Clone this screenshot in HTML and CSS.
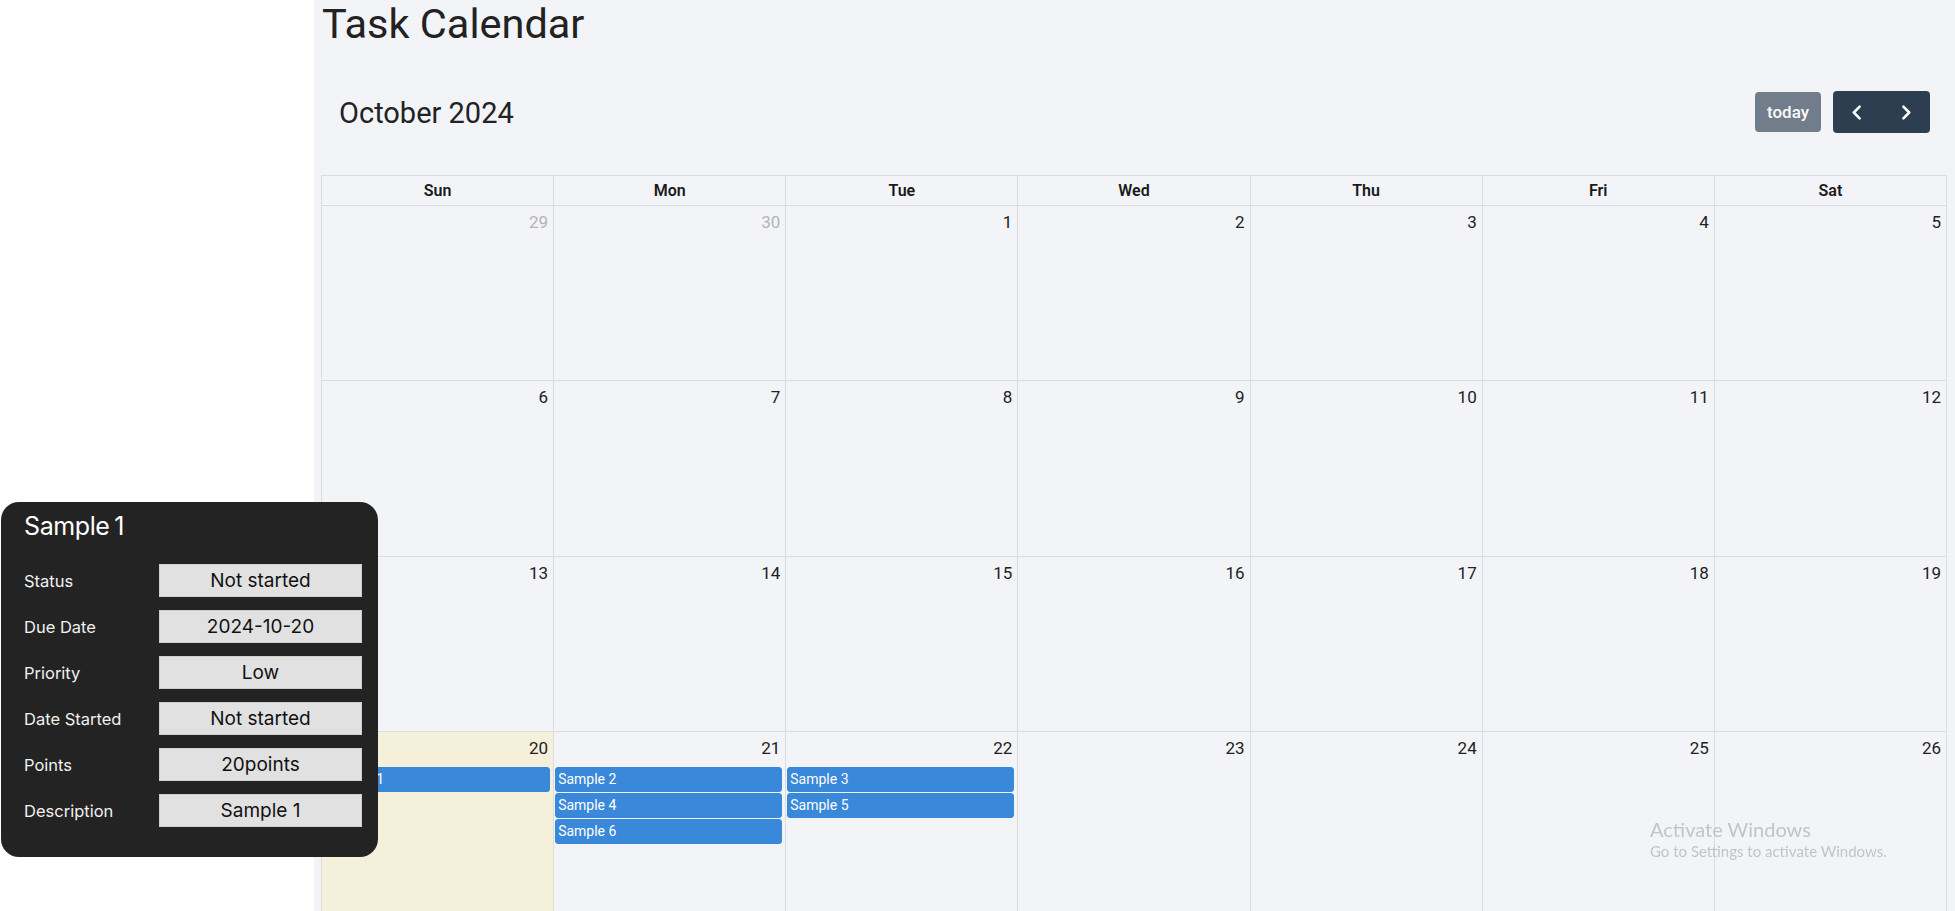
FILE: index.html
```html
<!DOCTYPE html>
<html lang="en">
<head>
<meta charset="utf-8">
<title>Task Calendar</title>
<link rel="stylesheet" href="styles.css">
</head>
<body>
<div class="app">
  <aside class="sidebar"></aside>
  <main class="main">
    <h1 class="page-title">Task Calendar</h1>
    <div class="toolbar">
      <h2 class="month-title">October 2024</h2>
      <div class="toolbar-actions">
        <button class="btn btn-today" type="button">today</button>
        <div class="btn-group">
          <button class="btn btn-nav" type="button" aria-label="prev">
            <svg viewBox="0 0 16 16" width="17" height="17"><polyline points="10,2.5 4.5,8 10,13.5" fill="none" stroke="#fff" stroke-width="2.4" stroke-linecap="round" stroke-linejoin="round"/></svg>
          </button>
          <button class="btn btn-nav" type="button" aria-label="next">
            <svg viewBox="0 0 16 16" width="17" height="17"><polyline points="6,2.5 11.5,8 6,13.5" fill="none" stroke="#fff" stroke-width="2.4" stroke-linecap="round" stroke-linejoin="round"/></svg>
          </button>
        </div>
      </div>
    </div>

    <div class="cal-grid">
      <div class="dow">Sun</div>
      <div class="dow">Mon</div>
      <div class="dow">Tue</div>
      <div class="dow">Wed</div>
      <div class="dow">Thu</div>
      <div class="dow">Fri</div>
      <div class="dow">Sat</div>

      <div class="day other"><span class="num">29</span></div>
      <div class="day other"><span class="num">30</span></div>
      <div class="day"><span class="num">1</span></div>
      <div class="day"><span class="num">2</span></div>
      <div class="day"><span class="num">3</span></div>
      <div class="day"><span class="num">4</span></div>
      <div class="day"><span class="num">5</span></div>

      <div class="day"><span class="num">6</span></div>
      <div class="day"><span class="num">7</span></div>
      <div class="day"><span class="num">8</span></div>
      <div class="day"><span class="num">9</span></div>
      <div class="day"><span class="num">10</span></div>
      <div class="day"><span class="num">11</span></div>
      <div class="day"><span class="num">12</span></div>

      <div class="day"><span class="num">13</span></div>
      <div class="day"><span class="num">14</span></div>
      <div class="day"><span class="num">15</span></div>
      <div class="day"><span class="num">16</span></div>
      <div class="day"><span class="num">17</span></div>
      <div class="day"><span class="num">18</span></div>
      <div class="day"><span class="num">19</span></div>

      <div class="day today"><span class="num">20</span>
        <div class="events"><div class="event">Sample 1</div></div>
      </div>
      <div class="day"><span class="num">21</span>
        <div class="events">
          <div class="event">Sample 2</div>
          <div class="event">Sample 4</div>
          <div class="event">Sample 6</div>
        </div>
      </div>
      <div class="day"><span class="num">22</span>
        <div class="events">
          <div class="event">Sample 3</div>
          <div class="event">Sample 5</div>
        </div>
      </div>
      <div class="day"><span class="num">23</span></div>
      <div class="day"><span class="num">24</span></div>
      <div class="day"><span class="num">25</span></div>
      <div class="day"><span class="num">26</span></div>
    </div>
  </main>
</div>

<div class="task-popup">
  <h3 class="popup-title">Sample 1</h3>
  <div class="popup-fields">
    <span class="field-label">Status</span><span class="field-value">Not started</span>
    <span class="field-label">Due Date</span><span class="field-value">2024-10-20</span>
    <span class="field-label">Priority</span><span class="field-value">Low</span>
    <span class="field-label">Date Started</span><span class="field-value">Not started</span>
    <span class="field-label">Points</span><span class="field-value">20points</span>
    <span class="field-label">Description</span><span class="field-value">Sample 1</span>
  </div>
</div>

<div class="watermark">
  <div class="wm-title">Activate Windows</div>
  <div class="wm-sub">Go to Settings to activate Windows.</div>
</div>
</body>
</html>
```

FILE: styles.css
```css
* { box-sizing: border-box; }

html, body {
  margin: 0;
  padding: 0;
  height: 100%;
  overflow: hidden;
}

body {
  font-family: Roboto, "Liberation Sans", sans-serif;
  color: #212121;
  background: #ffffff;
}

.app {
  display: flex;
  height: 100vh;
}

.sidebar {
  width: 314px;
  flex: 0 0 314px;
  background: #ffffff;
}

.main {
  flex: 1;
  background: #f3f4f8;
  padding: 0 8px 0 7px;
  height: 100vh;
  overflow: hidden;
}

.page-title {
  margin: 0;
  font-size: 41.5px;
  font-weight: 400;
  line-height: 47px;
  color: #222;
  padding-left: 1px;
}

.toolbar {
  display: flex;
  align-items: center;
  justify-content: space-between;
  margin-top: 44px;
  margin-bottom: 42px;
  padding: 0 17px 0 18px;
  height: 42px;
}

.month-title {
  margin: 0;
  font-size: 29px;
  font-weight: 400;
  color: #222;
  position: relative;
  top: 1px;
}

.toolbar-actions {
  display: flex;
  align-items: center;
  gap: 12px;
}

.btn {
  border: none;
  color: #fff;
  font-family: Roboto, "Liberation Sans", sans-serif;
  cursor: pointer;
}

.btn-today {
  height: 40px;
  padding: 0 12px;
  font-size: 17px;
  font-weight: 500;
  background: #2c3e50;
  opacity: 0.65;
  border-radius: 4px;
}

.btn-group {
  display: flex;
  background: #2c3e50;
  border-radius: 4px;
  height: 42px;
}

.btn-nav {
  width: 48.5px;
  height: 42px;
  background: transparent;
  display: flex;
  align-items: center;
  justify-content: center;
  padding: 0;
}

.btn-nav svg { display: block; }

.cal-grid {
  display: grid;
  grid-template-columns: repeat(7, 1fr);
  grid-template-rows: 30px 175.33px 175.33px 175.34px 180px;
  border-right: 1px solid #dcdcdf;
}

.dow {
  border-left: 1px solid #dcdcdf;
  border-top: 1px solid #dcdcdf;
  display: flex;
  align-items: center;
  justify-content: center;
  font-size: 16px;
  font-weight: 600;
  color: #1a1a1a;
}

.day {
  border-left: 1px solid #dcdcdf;
  border-top: 1px solid #dcdcdf;
  display: flex;
  flex-direction: column;
  min-width: 0;
}

.day.today { background: #f5f0d9; }

.num {
  align-self: flex-end;
  font-size: 17px;
  line-height: 20px;
  padding: 6px 5px 0 0;
  color: #222;
}

.day.other .num { color: #b4b4b4; }

.events {
  margin-top: 9px;
  display: flex;
  flex-direction: column;
  gap: 1px;
}

.event {
  height: 25px;
  margin: 0 3px 0 1px;
  padding: 0 2px;
  background: #3a88d9;
  border: 1px solid #3788d8;
  border-radius: 3px;
  color: #fff;
  font-size: 14px;
  font-weight: 400;
  line-height: 23px;
  white-space: nowrap;
  overflow: hidden;
}

.task-popup {
  position: fixed;
  left: 1px;
  top: 502px;
  width: 377px;
  height: 355px;
  background: #232323;
  border-radius: 18px;
  padding: 10px 16px 30px 23px;
  font-family: Inter, "Liberation Sans", sans-serif;
  color: #f2f2f2;
}

.popup-title {
  margin: 0 0 23px;
  font-size: 25px;
  font-weight: 400;
  line-height: 29px;
  letter-spacing: -0.4px;
  word-spacing: -2px;
  color: #fff;
}

.popup-fields {
  display: grid;
  grid-template-columns: 135px 203px;
  grid-auto-rows: 33px;
  row-gap: 13px;
  align-items: center;
}

.field-label {
  font-size: 16.5px;
  color: #f0f0f0;
}

.field-value {
  height: 33px;
  background: #e1e1e1;
  border: 1px solid #cfcfcf;
  color: #111;
  font-size: 19px;
  line-height: 31px;
  text-align: center;
}

.watermark {
  position: fixed;
  left: 1650px;
  top: 817px;
  font-family: Lato, "Open Sans", sans-serif;
  color: #c3c4c7;
  pointer-events: none;
}

.wm-title {
  font-size: 20px;
  line-height: 24px;
}

.wm-sub {
  font-size: 15px;
  line-height: 18px;
  margin-top: 1px;
}
```
